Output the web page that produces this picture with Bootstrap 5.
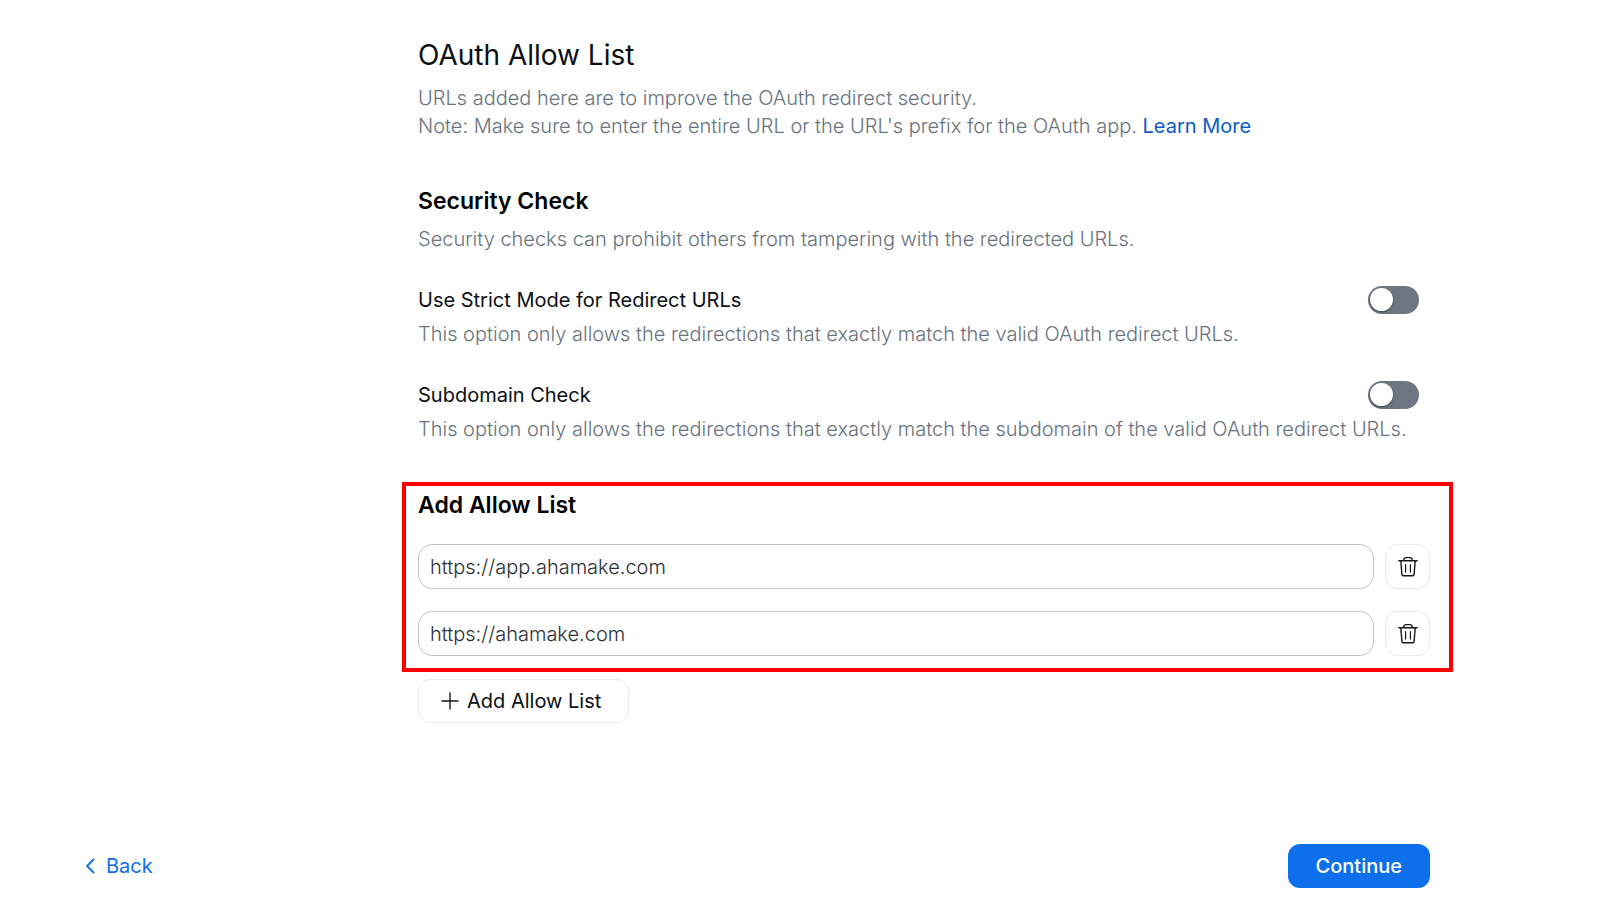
<!DOCTYPE html>
<html lang="en">
<head>
<meta charset="utf-8">
<meta name="viewport" content="width=device-width, initial-scale=1">
<title>OAuth Allow List</title>
<link href="https://cdn.jsdelivr.net/npm/bootstrap@5.3.0/dist/css/bootstrap.min.css" rel="stylesheet">
<style>
  body { font-family: Inter, "Liberation Sans", sans-serif; font-size: 20px; line-height: 28px; color: #0b0f14; background: #fff; }
  .settings-page { padding: 37px 147px 28px 84px; }
  .settings-grid { display: grid; grid-template-columns: 318px minmax(0, 1fr); }
  .settings-main { grid-column: 2; }
  .inset { padding: 0 16px; }
  .page-title { font-size: 28px; line-height: 36px; font-weight: 400; margin: 0 0 11px; }
  .section-title { font-size: 23px; line-height: 28px; font-weight: 600; margin: 0; color: #000; }
  .hint { color: #69727e; font-weight: 300; margin: 0; }
  .hint a { color: #0b5cc4; font-weight: 400; text-decoration: none; }
  .security { margin-top: 47px; }
  .security .hint { margin-top: 10px; }
  .security .option { margin-top: 33px; }
  .security .option .hint { margin-top: 6px; }
  .option-row { padding-right: 18px; }
  .form-switch .form-check-input.option-switch {
    --bs-form-switch-bg: none; position: relative; float: none; width: 51px; height: 28px; margin: 0;
    border: 0; border-radius: 14px; background: #6e7681; }
  .option-switch::after { content: ""; position: absolute; top: 2px; left: 2px; width: 23px; height: 23px;
    border-radius: 50%; background: #fff; box-shadow: 0 1px 2px rgba(0, 0, 0, .45); }
  .form-switch .option-switch:checked { background: #0d6fec; }
  .option-switch:checked::after { left: 26px; }
  .allow-box { margin-top: 39px; border: 4px solid #f00; padding: 5px 19px 12px 12px; }
  .allow-rows { display: grid; gap: 22px; margin-top: 25px; }
  .url-row { gap: 11px; }
  .url-input { height: 45px; padding: 0 11px; font-size: 20px; font-weight: 300; color: #2c2f33; border: 1px solid #bcc2ca; border-radius: 14px; }
  .btn-outline { border: 1px solid #e8eaed; border-radius: 12px; background: #fff; color: #0b0f14; font-size: 20px; line-height: 28px; }
  .btn-trash { width: 45px; height: 45px; padding: 0; border-radius: 12px; flex: none; }
  .btn-add { height: 44px; padding: 0 27px 0 22px; margin-top: 7px; }
  .page-footer { margin-top: 121px; padding-right: 23px; }
  .back-link { color: #0d6fec; text-decoration: none; }
  .btn-continue { height: 44px; padding: 0 28px; border: 0; border-radius: 12px; background: #0d6fec; color: #fff; font-size: 20px; line-height: 28px; font-weight: 500; }
</style>
</head>
<body>
<div class="settings-page">
  <div class="settings-grid">
    <main class="settings-main">
      <header class="inset">
        <h1 class="page-title">OAuth Allow List</h1>
        <p class="hint">URLs added here are to improve the OAuth redirect security.<br>Note: Make sure to enter the entire URL or the URL's prefix for the OAuth app. <a href="#">Learn More</a></p>
      </header>

      <section class="inset security">
        <h2 class="section-title">Security Check</h2>
        <p class="hint">Security checks can prohibit others from tampering with the redirected URLs.</p>
        <div class="option">
          <div class="form-switch option-row d-flex justify-content-between align-items-center ps-0">
            <label for="strict">Use Strict Mode for Redirect URLs</label>
            <input class="form-check-input option-switch" type="checkbox" role="switch" id="strict">
          </div>
          <p class="hint">This option only allows the redirections that exactly match the valid OAuth redirect URLs.</p>
        </div>
        <div class="option">
          <div class="form-switch option-row d-flex justify-content-between align-items-center ps-0">
            <label for="subdomain">Subdomain Check</label>
            <input class="form-check-input option-switch" type="checkbox" role="switch" id="subdomain">
          </div>
          <p class="hint">This option only allows the redirections that exactly match the subdomain of the valid OAuth redirect URLs.</p>
        </div>
      </section>

      <section class="allow-box">
        <h2 class="section-title">Add Allow List</h2>
        <div class="allow-rows">
          <div class="d-flex url-row">
            <input class="form-control url-input" type="text" value="https://app.ahamake.com" aria-label="Allowed URL 1">
            <button class="btn btn-outline btn-trash d-flex align-items-center justify-content-center" type="button" aria-label="Delete URL 1">
              <svg width="20" height="22" viewBox="0 0 20 22" fill="none" stroke="#15191e" stroke-width="1.4" stroke-linecap="round" stroke-linejoin="round"><path d="M.8 4.800h18.400M5.600 4.600c.2-2 1-3 2.400-3h4c1.400 0 2.200 1 2.400 3M2.800 4.800l1.100 13.600a1.500 1.500 0 0 0 1.500 1.400h9.200a1.500 1.500 0 0 0 1.500-1.400L17.200 4.800"/><path stroke-width="1.200" d="M7.600 8.500v7.600M12.400 8.500v7.600"/></svg>
            </button>
          </div>
          <div class="d-flex url-row">
            <input class="form-control url-input" type="text" value="https://ahamake.com" aria-label="Allowed URL 2">
            <button class="btn btn-outline btn-trash d-flex align-items-center justify-content-center" type="button" aria-label="Delete URL 2">
              <svg width="20" height="22" viewBox="0 0 20 22" fill="none" stroke="#15191e" stroke-width="1.4" stroke-linecap="round" stroke-linejoin="round"><path d="M.8 4.800h18.400M5.600 4.600c.2-2 1-3 2.400-3h4c1.400 0 2.200 1 2.400 3M2.800 4.800l1.100 13.600a1.500 1.500 0 0 0 1.500 1.400h9.200a1.500 1.500 0 0 0 1.500-1.400L17.200 4.800"/><path stroke-width="1.200" d="M7.600 8.500v7.600M12.400 8.500v7.600"/></svg>
            </button>
          </div>
        </div>
      </section>

      <div class="inset">
        <button class="btn btn-outline btn-add d-inline-flex align-items-center gap-2" type="button">
          <svg width="18" height="18" viewBox="0 0 18 18" fill="none" stroke="#15191e" stroke-width="1.4" stroke-linecap="round"><path d="M9 1v16M1 9h16"/></svg>
          Add Allow List
        </button>
      </div>
    </main>
  </div>

  <footer class="page-footer d-flex justify-content-between align-items-center">
    <a class="back-link d-inline-flex align-items-center gap-2" href="#">
      <svg width="14" height="18" viewBox="0 0 14 18" fill="none" stroke="currentColor" stroke-width="1.8" stroke-linecap="round" stroke-linejoin="round"><path d="M9.500 2.500 3 9l6.500 6.500"/></svg>
      Back
    </a>
    <button class="btn btn-continue" type="button">Continue</button>
  </footer>
</div>
<script src="https://cdn.jsdelivr.net/npm/bootstrap@5.3.0/dist/js/bootstrap.bundle.min.js"></script>
</body>
</html>
